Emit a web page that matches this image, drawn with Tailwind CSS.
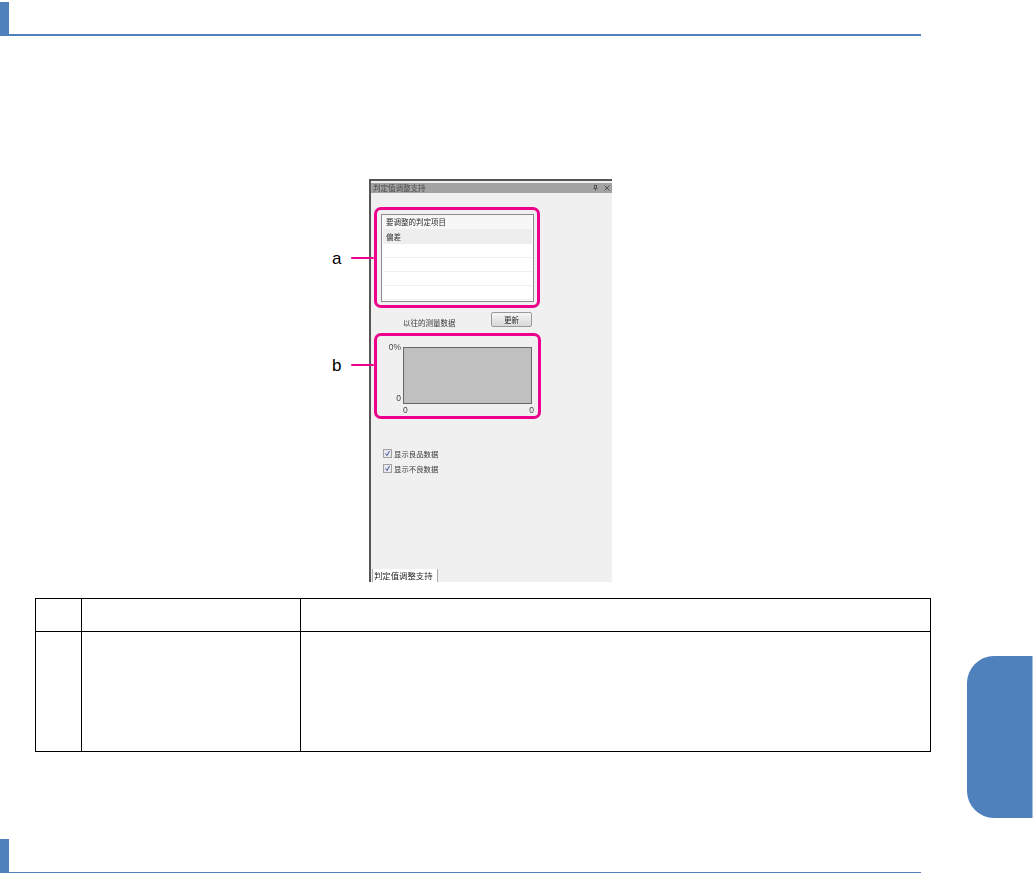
<!doctype html>
<html lang="zh">
<head>
<meta charset="utf-8">
<script src="https://cdn.jsdelivr.net/npm/@tailwindcss/browser@4"></script>
</head>
<body class="bg-white">
<div class="relative w-[1033px] h-[873px] overflow-hidden bg-white flex flex-col font-['Liberation_Sans','Noto_Sans_CJK_SC',sans-serif]">

  <header class="mt-[2px] flex items-end w-[921px] h-[34px] shrink-0">
    <div class="w-[9px] h-full bg-[#4f81bd]"></div>
    <div class="flex-1 h-[2px] bg-[#4f81bd]"></div>
  </header>

  <section class="mt-[143px] pl-[332px] flex shrink-0">
    <div class="relative z-10 w-[37px] shrink-0 pt-[71px] flex flex-col text-black text-[17px]">
      <div class="h-[16px] flex items-center leading-none">
        <span class="w-[19px] shrink-0">a</span>
        <span class="w-[23px] h-[2px] shrink-0 rounded-full bg-[#ec008c]"></span>
      </div>
      <div class="mt-[91px] h-[16px] flex items-center leading-none">
        <span class="w-[19px] shrink-0">b</span>
        <span class="w-[23px] h-[2px] shrink-0 rounded-full bg-[#ec008c]"></span>
      </div>
    </div>

    <div class="w-[243px] h-[403px] flex flex-col bg-[#f0f0f0] border-l-2 border-t-2 border-[#555555] font-['Noto_Sans_CJK_SC','Liberation_Sans',sans-serif] text-[#3a3a3a]">
      <div class="mt-[2px] h-[10px] shrink-0 bg-[#a3a3a3] flex items-center justify-between pl-[2px] pr-[2px] text-[7.5px] leading-none text-[#4a4a4a] blur-[0.35px]">
        <span>判定值调整支持</span>
        <span class="flex items-center gap-[6px]">
          <svg width="5" height="6" viewBox="0 0 5 6" fill="none" stroke="#555555" stroke-width="1"><path d="M1 .5h3M1.5 .5v3M3.5 .5v3M.5 3.5h4M2.5 3.5v2"/></svg>
          <svg width="6" height="6" viewBox="0 0 6 6" fill="none" stroke="#555555" stroke-width="1"><path d="M.5 .5l5 5M5.5 .5l-5 5"/></svg>
        </span>
      </div>

      <div class="ml-[3px] mt-[14px] w-[166px] h-[101px] shrink-0 border-[3px] border-[#ec008c] rounded-[7px] pl-[4px] pt-[4px]">
        <div class="w-[153px] h-[88px] border border-[#8a8a8a] bg-white px-[1px] text-[7.5px] leading-none text-[#2a2a2a]">
          <div class="h-[14px] bg-[#f7f7f7] flex items-center pl-[3px] blur-[0.35px]">要调整的判定项目</div>
          <div class="h-[15px] bg-[#eeeeee] flex items-center pl-[3px] blur-[0.35px]">偏差</div>
          <div class="h-[14px] border-b border-[#f0f0f0]"></div>
          <div class="h-[14px] border-b border-[#f0f0f0]"></div>
          <div class="h-[14px] border-b border-[#f0f0f0]"></div>
          <div class="h-[14px] border-b border-[#f0f0f0]"></div>
        </div>
      </div>

      <div class="ml-[3px] w-[167px] h-[25px] shrink-0 flex items-start pl-[29px] text-[7.5px] leading-none">
        <span class="mt-[11px] w-[53px] whitespace-nowrap blur-[0.35px]">以往的测量数据</span>
        <button class="ml-[35px] mt-[4px] w-[41px] h-[15px] border border-[#9a9a9a] rounded-[2px] bg-gradient-to-b from-[#f6f6f6] to-[#d8d8d8] text-[7.5px] leading-none text-[#2a2a2a]"><span class="blur-[0.3px] inline-block">更新</span></button>
      </div>

      <div class="ml-[3px] w-[167px] h-[86px] shrink-0 border-[3px] border-[#ec008c] rounded-[7px] pt-[6px] text-[8.5px] leading-none font-['Liberation_Sans',sans-serif] text-[#444444]">
        <div class="flex">
          <div class="w-[26px] h-[62px] flex flex-col justify-between items-end pr-[2px] pb-[1px] blur-[0.2px]">
            <span class="h-[10px] flex items-center">0%</span>
            <span class="h-[10px] flex items-center">0</span>
          </div>
          <div class="mt-[5px] w-[129px] h-[57px] bg-[#c0c0c0] border border-[#666666]"></div>
        </div>
        <div class="ml-[26px] mt-[1px] w-[131px] h-[10px] flex justify-between items-center blur-[0.2px]">
          <span>0</span><span>0</span>
        </div>
      </div>

      <div class="ml-[12px] mt-[30px] flex flex-col gap-[6px] text-[7.4px] leading-none">
        <label class="h-[9px] flex items-center gap-[2px]">
          <span class="w-[9px] h-[9px] shrink-0 border border-[#a0a0a0] bg-[#e8e8f0] flex items-center justify-center">
            <svg width="7" height="7" viewBox="0 0 7 7" fill="none" stroke="#3b4f99" stroke-width="1"><path d="M1.5 3.5l1.5 2 2.500-4.500"/></svg>
          </span>
          <span class="blur-[0.35px] whitespace-nowrap">显示良品数据</span>
        </label>
        <label class="h-[9px] flex items-center gap-[2px]">
          <span class="w-[9px] h-[9px] shrink-0 border border-[#a0a0a0] bg-[#e8e8f0] flex items-center justify-center">
            <svg width="7" height="7" viewBox="0 0 7 7" fill="none" stroke="#3b4f99" stroke-width="1"><path d="M1.5 3.5l1.500 2 2.500-4.500"/></svg>
          </span>
          <span class="blur-[0.35px] whitespace-nowrap">显示不良数据</span>
        </label>
      </div>

      <div class="mt-auto ml-[1px] w-[66px] h-[13px] shrink-0 bg-white border-l border-r border-[#aaaaaa] flex items-center pl-[1px] text-[8.400px] leading-none text-[#2a2a2a]">
        <span class="blur-[0.35px] whitespace-nowrap">判定值调整支持</span>
      </div>
    </div>
  </section>

  <section class="mt-[16px] ml-[35px] w-[896px] shrink-0 grid grid-cols-[46px_219px_1fr] grid-rows-[33px_119px] border border-black">
    <div class="border-r border-b border-black"></div>
    <div class="border-r border-b border-black"></div>
    <div class="border-b border-black"></div>
    <div class="border-r border-black"></div>
    <div class="border-r border-black"></div>
    <div></div>
  </section>

  <footer class="mt-[87px] flex items-start w-[921px] h-[34px] shrink-0">
    <div class="w-[9px] h-full bg-[#4f81bd]"></div>
    <div class="flex-1 h-[2px] mt-[33px] bg-[#4f81bd]"></div>
  </footer>

  <div class="absolute right-0 top-[656px] w-[66px] h-[162px] bg-[#4f81bd] rounded-l-[27px] border-r border-[#a5bfdd]"></div>
</div>
</body>
</html>
